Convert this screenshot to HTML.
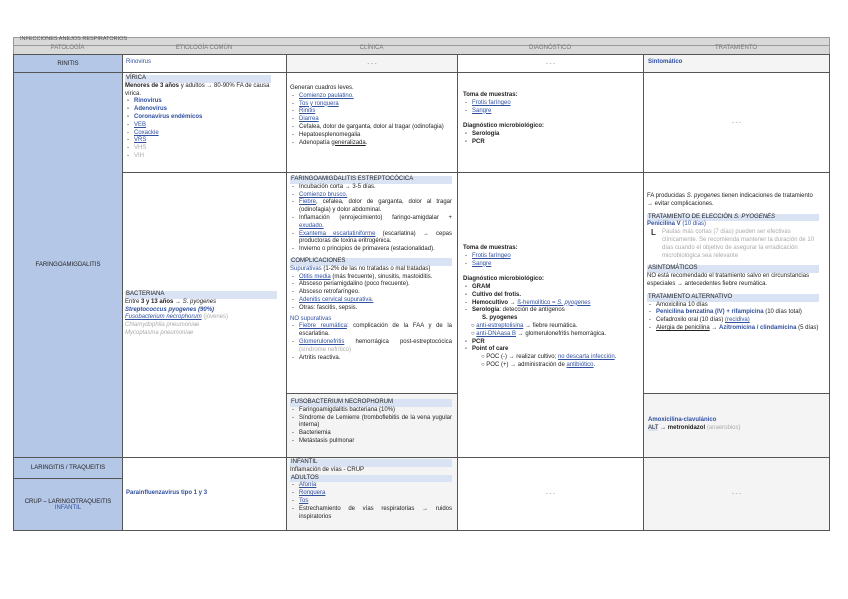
<!DOCTYPE html>
<html><head><meta charset="utf-8"><style>
body{margin:0;width:848px;height:599px;background:#fff;font-family:"Liberation Sans",sans-serif;font-size:6px;color:#222;position:relative;overflow:hidden}
.c{position:absolute;box-sizing:border-box;border:1px solid #555}
.t{position:absolute;line-height:7.8px;font-size:6px}
.h{background:#dae3f3;display:block;padding-left:1px}
.b{color:#2f4f9f}
.g{color:#aaa}
.u{text-decoration:underline}
.k{font-weight:bold}
ul{margin:0;padding:0;list-style:none}
li{padding-left:9px;position:relative}
li:before{content:"-";position:absolute;left:2px;top:0;color:#222;text-decoration:none}
.j{text-align:justify}
.ctr{display:flex;align-items:center;justify-content:center}
</style></head><body>
<div class="c" style="left:13px;top:37px;width:817px;height:9px;background:#d9d9d9;border-color:#999"></div>
<div class="t" style="left:20px;top:36px;color:#555;font-size:5.5px">INFECCIONES ANEJOS RESPIRATORIOS</div>
<div class="c" style="left:13px;top:45px;width:817px;height:10px;background:#d9d9d9;border-color:#999"></div>
<div class="t" style="left:13px;top:45px;width:109px;text-align:center;color:#777">PATOLOGÍA</div>
<div class="t" style="left:122px;top:45px;width:164px;text-align:center;color:#777">ETIOLOGÍA COMÚN</div>
<div class="t" style="left:286px;top:45px;width:171px;text-align:center;color:#777">CLÍNICA</div>
<div class="t" style="left:457px;top:45px;width:186px;text-align:center;color:#777">DIAGNÓSTICO</div>
<div class="t" style="left:643px;top:45px;width:186px;text-align:center;color:#777">TRATAMIENTO</div>
<div class="c ctr" style="left:13px;top:54px;width:110px;height:19px;background:#b4c7e7">RINITIS</div>
<div class="c ctr" style="left:13px;top:72px;width:110px;height:386px;background:#b4c7e7">FARINGOAMIGDALITIS</div>
<div class="c ctr" style="left:13px;top:457px;width:110px;height:22px;background:#b4c7e7">LARINGITIS / TRAQUEITIS</div>
<div class="c ctr" style="left:13px;top:478px;width:110px;height:53px;background:#b4c7e7;flex-direction:column">CRUP – LARINGOTRAQUEITIS<span class="b">INFANTIL</span></div>
<div class="c" style="left:122px;top:54px;width:165px;height:19px"></div>
<div class="t b" style="left:126px;top:59px">Rinovirus</div>
<div class="c ctr" style="left:286px;top:54px;width:172px;height:19px;background:#f4f4f4;color:#888">- - -</div>
<div class="c ctr" style="left:457px;top:54px;width:187px;height:19px;color:#888">- - -</div>
<div class="c" style="left:643px;top:54px;width:187px;height:19px;background:#f4f4f4"></div>
<div class="t b k" style="left:648px;top:59px">Sintomático</div>
<div class="c" style="left:122px;top:72px;width:165px;height:101px"></div>
<div class="t" style="left:125px;top:75px;width:146px"><span class="h">VÍRICA</span><span class="k">Menores de 3 años</span> y adultos → 80-90% FA de causa vírica.<ul><li class="k b">Rinovirus</li><li class="k b">Adenovirus</li><li class="k b">Coronavirus endémicos</li><li class="b"><span class="u">VEB</span></li><li class="b"><span class="u">Coxackie</span></li><li class="b"><span class="u">VRS</span></li><li class="g">VHS</li><li class="g">VIH</li></ul></div>
<div class="c" style="left:286px;top:72px;width:172px;height:101px"></div>
<div class="t j" style="left:290px;top:85px;width:162px">Generan cuadros leves.<ul><li class="b"><span class="u">Comienzo paulatino.</span></li><li class="b"><span class="u">Tos y ronquera</span></li><li class="b"><span class="u">Rinitis</span></li><li class="b"><span class="u">Diarrea</span></li><li>Cefalea, dolor de garganta, dolor al tragar (odinofagia)</li><li>Hepatoesplenomegalia</li><li>Adenopatía <span class="u">generalizada</span>.</li></ul></div>
<div class="c" style="left:457px;top:72px;width:187px;height:101px"></div>
<div class="t" style="left:463px;top:92px"><span class="k">Toma de muestras:</span><ul><li class="b"><span class="u">Frotis faríngeo</span></li><li class="b"><span class="u">Sangre</span></li></ul><br><span class="k">Diagnóstico microbiológico:</span><ul class="k"><li>Serología</li><li>PCR</li></ul></div>
<div class="c ctr" style="left:643px;top:72px;width:187px;height:101px;color:#888">- - -</div>
<div class="c" style="left:122px;top:172px;width:165px;height:286px"></div>
<div class="t" style="left:125px;top:291px;width:152px"><span class="h">BACTERIANA</span>Entre <b>3 y 13 años</b> → <i>S. pyogenes</i><br><i class="k b">Streptococcus pyogenes (90%)</i><br><i class="b u">Fusobacterium necrophorum</i> <span class="g">(jóvenes)</span><br><i class="g">Chlamydophila pneumoniae</i><br><i class="g">Mycoplasma pneumoniae</i></div>
<div class="c" style="left:286px;top:172px;width:172px;height:222px"></div>
<div class="t j" style="left:290px;top:176px;width:162px"><span class="h">FARINGOAMIGDALITIS ESTREPTOCÓCICA</span><ul><li>Incubación corta → 3-5 días.</li><li class="b"><span class="u">Comienzo brusco.</span></li><li><span class="b u">Fiebre</span>, cefalea, dolor de garganta, dolor al tragar (odinofagia) y dolor abdominal.</li><li>Inflamación (enrojecimiento) faringo-amigdalar + <span class="b u">exudado.</span></li><li><span class="b u">Exantema escarlatiniforme</span> (escarlatina) → cepas productoras de toxina eritrogénica.</li><li>Invierno o principios de primavera (estacionalidad).</li></ul><div style="height:4px"></div><span class="h">COMPLICACIONES</span><span class="b">Supurativas</span> (1-2% de las no tratadas o mal tratadas)<ul><li><span class="b u">Otitis media</span> (más frecuente), sinusitis, mastoiditis.</li><li>Absceso periamigdalino (poco frecuente).</li><li>Absceso retrofaríngeo.</li><li class="b"><span class="u">Adenitis cervical supurativa.</span></li><li>Otras: fascitis, sepsis.</li></ul><div style="height:3px"></div><span class="b">NO supurativas</span><ul><li><span class="b u">Fiebre reumática</span>: complicación de la FAA y de la escarlatina.</li><li><span class="b u">Glomerulonefritis</span> hemorrágica post-estreptocócica <span class="g">(síndrome nefrítico)</span></li><li>Artritis reactiva.</li></ul></div>
<div class="c" style="left:286px;top:393px;width:172px;height:65px;background:#f4f4f4"></div>
<div class="t j" style="left:290px;top:399px;width:162px"><span class="h">FUSOBACTERIUM NECROPHORUM</span><ul><li>Faringoamigdalitis bacteriana (10%)</li><li>Síndrome de Lemierre (tromboflebitis de la vena yugular interna)</li><li>Bacteriemia</li><li>Metástasis pulmonar</li></ul></div>
<div class="c" style="left:457px;top:172px;width:187px;height:286px"></div>
<div class="t" style="left:463px;top:245px;width:176px"><span class="k">Toma de muestras:</span><ul><li class="b"><span class="u">Frotis faríngeo</span></li><li class="b"><span class="u">Sangre</span></li></ul><br><span class="k">Diagnóstico microbiológico:</span><ul><li class="k">GRAM</li><li class="k">Cultivo del frotis.</li><li><b>Hemocultivo</b> → <span class="b u">ß-hemolítico = <i>S. pyogenes</i></span></li><li><b>Serología</b>: detección de antígenos<br>&nbsp;&nbsp;&nbsp;&nbsp;&nbsp;&nbsp;<b>S. pyogenes</b></li></ul><div style="padding-left:8px">○ <span class="b u">anti-estreptolisina</span> → fiebre reumática.<br>○ <span class="b u">anti-DNAasa B</span> → glomerulonefritis hemorrágica.</div><ul class="k"><li>PCR</li><li>Point of care</li></ul><div style="padding-left:18px">○ POC (-) → realizar cultivo; <span class="b u">no descarta infección</span>.<br>○ POC (+) → administración de <span class="b u">antibiótico</span>.</div></div>
<div class="c" style="left:643px;top:172px;width:187px;height:222px"></div>
<div class="t" style="left:647px;top:193px;width:172px">FA producidas <i>S. pyogenes</i> tienen indicaciones de tratamiento → evitar complicaciones.<div style="height:5px"></div><span class="h">TRATAMIENTO DE ELECCIÓN <i>S. PYOGENES</i></span><span class="k b">Penicilina V</span> <span class="b">(10 días)</span><div style="padding-left:15px;position:relative" class="g"><b style="position:absolute;left:4px;top:0;color:#333;font-size:8px">L</b>Pautas más cortas (7 días) pueden ser efectivas clínicamente. Se recomienda mantener la duración de 10 días cuando el objetivo de asegurar la erradicación microbiológica sea relevante</div><div style="height:5px"></div><span class="h">ASINTOMÁTICOS</span>NO está recomendado el tratamiento salvo en circunstancias especiales → antecedentes fiebre reumática.<div style="height:5px"></div><span class="h">TRATAMIENTO ALTERNATIVO</span><ul><li>Amoxicilina 10 días</li><li><span class="k b">Penicilina benzatina (IV) + rifampicina</span> (10 días total)</li><li>Cefadroxilo oral (10 días) <span class="b u">(recidiva)</span></li><li><span class="u">Alergia de penicilina</span> → <span class="k b">Azitromicina / clindamicina</span> (5 días)</li></ul></div>
<div class="c" style="left:643px;top:393px;width:187px;height:65px;background:#f4f4f4"></div>
<div class="t" style="left:648px;top:417px"><span class="k b">Amoxicilina-clavulánico</span><br><span style="background:#dae3f3">ALT</span> → <b>metronidazol</b> <span class="g">(anaerobios)</span></div>
<div class="c" style="left:122px;top:457px;width:165px;height:74px"></div>
<div class="t k b" style="left:126px;top:490px">Parainfluenzavirus tipo 1 y 3</div>
<div class="c" style="left:286px;top:457px;width:172px;height:74px;background:#f4f4f4"></div>
<div class="t j" style="left:290px;top:459px;width:162px"><span class="h">INFANTIL</span>Inflamación de vías - CRUP<span class="h">ADULTOS</span><ul><li class="b"><span class="u">Afonía</span></li><li class="b"><span class="u">Ronquera</span></li><li class="b"><span class="u">Tos</span></li><li>Estrechamiento de vías respiratorias → ruidos inspiratorios</li></ul></div>
<div class="c ctr" style="left:457px;top:457px;width:187px;height:74px;color:#888">- - -</div>
<div class="c ctr" style="left:643px;top:457px;width:187px;height:74px;background:#f4f4f4;color:#888">- - -</div>
</body></html>
